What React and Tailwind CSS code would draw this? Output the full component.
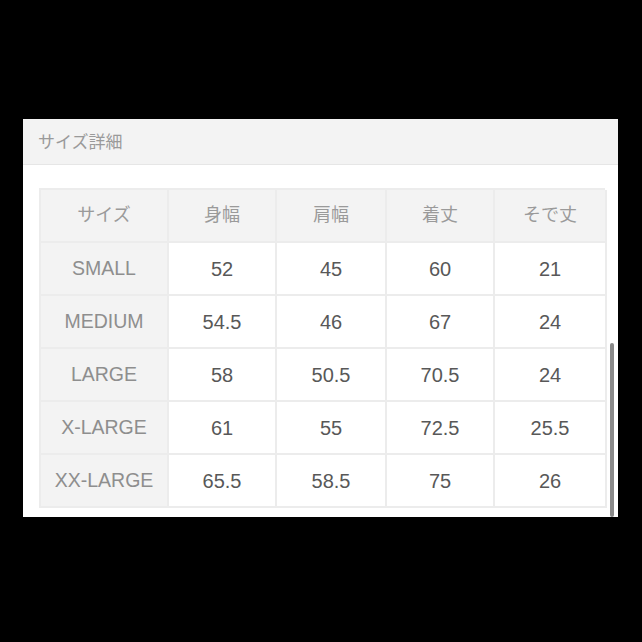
const rows = [
  ["SMALL", "52", "45", "60", "21"],
  ["MEDIUM", "54.5", "46", "67", "24"],
  ["LARGE", "58", "50.5", "70.5", "24"],
  ["X-LARGE", "61", "55", "72.5", "25.5"],
  ["XX-LARGE", "65.5", "58.5", "75", "26"],
];

const heads = ["サイズ", "身幅", "肩幅", "着丈", "そで丈"];

const font = { fontFamily: '"Liberation Sans", "Noto Sans CJK JP", sans-serif' };

export default function App() {
  return (
    <div className="h-[642px] w-[642px] bg-black pt-[119px] pl-[23px]" style={font}>
      <div className="relative flex h-[398px] w-[595px] flex-col bg-white">
        <div className="flex h-[46px] items-center border-b border-[#e6e6e6] bg-[#f3f3f3] px-[15px] pt-[2px] text-[17px] text-[#9a9a9a]">
          サイズ詳細
        </div>
        <div className="pl-[16px] pt-[23px]">
          <div className="grid w-[566px] grid-cols-[128px_108px_110px_108px_112px] border-l-2 border-t-2 border-[#ececec]">
            {heads.map((h) => (
              <div
                key={h}
                className="flex h-[53px] items-center justify-center border-b-2 border-r-2 border-[#ececec] bg-[#f3f3f3] text-[18px] text-[#9a9a9a]"
              >
                {h}
              </div>
            ))}
            {rows.map((r) =>
              r.map((c, i) => (
                <div
                  key={r[0] + i}
                  className={
                    i === 0
                      ? "flex h-[53px] items-center justify-center border-b-2 border-r-2 border-[#ececec] bg-[#f3f3f3] pt-[1px] text-[19.5px] text-[#8e8e8e]"
                      : "flex h-[53px] items-center justify-center border-b-2 border-r-2 border-[#ececec] bg-white pt-[1px] text-[20px] text-[#585858]"
                  }
                >
                  {c}
                </div>
              ))
            )}
          </div>
        </div>
        <div className="absolute right-[4px] top-[224px] h-[174px] w-[4px] rounded-full bg-[#8a8a8a]" />
      </div>
    </div>
  );
}
